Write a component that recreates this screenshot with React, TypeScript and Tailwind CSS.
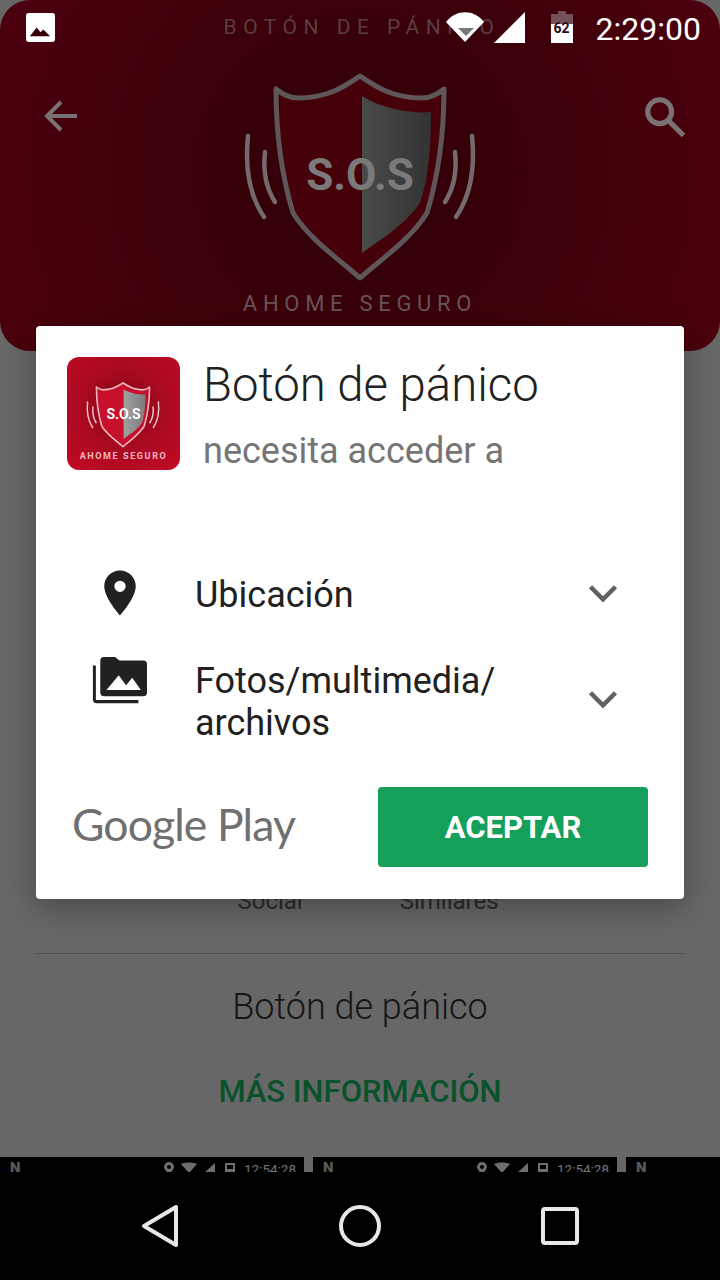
const sans = "font-['Roboto','Liberation_Sans',sans-serif]";

function Shield({ dim }: { dim?: boolean }) {
  const line = dim ? "#5f565a" : "#eeb6bd";
  const fill = dim ? "#46000a" : "#c8102c";
  const wave = dim ? "#736a6e" : "#f3c9ce";
  const sideA = dim ? "#4a4a4a" : "#a0a0a0";
  const sideB = dim ? "#333333" : "#7c7c7c";
  const id = dim ? "side-dim" : "side-bright";
  return (
    <svg viewBox="0 0 240 215" className="h-full w-full">
      <defs>
        <linearGradient id={id} x1="0" x2="1" y1="0" y2="0">
          <stop offset="0" stopColor={sideA} />
          <stop offset="1" stopColor={sideB} />
        </linearGradient>
      </defs>
      <path
        d="M120 6C108 14 90 28 58 28 C50 28 42 24 36 19 C36 60 40 100 53 143 C70 170 100 190 120 208 C140 190 170 170 187 143 C200 100 204 60 204 19 C198 24 190 28 182 28 C150 28 132 14 120 6Z"
        fill={fill}
        stroke={line}
        strokeWidth="5"
        strokeLinejoin="round"
      />
      <path d="M122 26C140 38 170 44 191 42 C191 80 188 110 180 133 C165 155 140 170 122 183Z" fill={`url(#${id})`} />
      <g fill="none" stroke={wave} strokeWidth="4.500" strokeLinecap="round">
        <path d="M8 66 C5 95 9 125 24 147" />
        <path d="M25 82 C23 100 26 118 35 132" />
        <path d="M232 66 C235 95 231 125 216 147" />
        <path d="M215 82 C217 100 214 118 205 132" />
      </g>
    </svg>
  );
}

function MiniStatus() {
  return (
    <div className="flex h-[15px] w-[304px] shrink-0 items-start justify-between overflow-hidden bg-black pt-[5px] pr-[8px] pl-[10px]">
      <span className="text-[15px] leading-[12px] font-black text-[#585858]">N</span>
      <div className="flex items-start gap-[8px]">
        <svg viewBox="0 0 72 12" className="h-[12px] w-[72px]" fill="#6e6e6e">
          <path fillRule="evenodd" d="M5 0a5 5 0 0 1 5 5c0 3-5 7-5 7S0 8 0 5a5 5 0 0 1 5-5zM5 3a2 2 0 1 0 0 4 2 2 0 0 0 0-4z" />
          <path d="M17 2C21 0 29 0 33 2L25 11Z" />
          <path d="M40 11L51 1V11Z" />
          <path fillRule="evenodd" d="M61 1h10v11H61zM63 3v4h6V3z" />
        </svg>
        <span className={`${sans} text-[13.500px] leading-[14px] text-[#777]`}>12:54:28</span>
      </div>
    </div>
  );
}

export default function App() {
  return (
    <div className={`${sans} relative flex h-[1280px] w-[720px] flex-col overflow-hidden bg-[#676767]`}>
      {/* cabecera */}
      <header className="relative h-[351px] shrink-0 rounded-[30px] bg-[radial-gradient(circle_at_50%_50%,#2e0008_0%,#3a0009_40%,#4c000d_100%)]">
        <div className="absolute top-[15px] left-[2px] w-full text-center text-[21px] leading-[24px] tracking-[6.500px] text-[#5a3d45]">BOTÓN DE PÁNICO</div>
        <svg viewBox="0 0 24 24" className="absolute top-[92px] left-[37px] h-[48px] w-[48px]" fill="none" stroke="#7a7175" strokeWidth="2">
          <path d="M20 12H5M12 5l-7 7 7 7" />
        </svg>
        <svg viewBox="0 0 24 24" className="absolute top-[90px] left-[638px] h-[52px] w-[52px]" fill="none" stroke="#7a7175" strokeWidth="2.400">
          <circle cx="10" cy="10" r="5.500" />
          <path d="M14 14l7 7" />
        </svg>
        <div className="absolute top-[70px] left-[240px] h-[215px] w-[240px]">
          <Shield dim />
          <div className="absolute top-[79px] left-0 w-full text-center text-[44px] leading-[52px] font-bold text-[#7a7a7a]">S.O.S</div>
        </div>
        <div className="absolute top-[290px] left-0 w-full text-center text-[22px] leading-[28px] tracking-[5.700px] text-[#6a5358]">AHOME SEGURO</div>

        {/* barra de estado */}
        <div className="relative flex items-start justify-between pt-[11px] pr-[19px] pl-[26px]">
          <svg viewBox="0 0 30 30" className="mt-[2px] h-[29px] w-[29px]">
            <rect x="0" y="0" width="30" height="30" rx="3" fill="#fff" />
            <path d="M4 24l7-9 4 5 3-3 7 7z" fill="#3a0009" />
          </svg>
          <div className="flex items-start">
            <svg viewBox="0 0 38 30" className="mt-[1px] mr-[10px] h-[30px] w-[38px]">
              <path d="M0 10C10 -3 28 -3 38 10L19 30Z" fill="#fff" />
              <path d="M12 16H28L20 24Z" fill="#777" />
            </svg>
            <svg viewBox="0 0 31 31" className="mt-[1px] mr-[26px] h-[31px] w-[31px]">
              <path d="M31 0V31H0Z" fill="#fff" />
            </svg>
            <div className="relative mr-[23px] h-[32px] w-[22px]">
              <svg viewBox="0 0 22 32" className="h-[32px] w-[22px]">
                <path d="M7 0h8v3h7v10H0V3h7z" fill="#73505a" />
                <path d="M0 13h22v19H0z" fill="#fff" />
              </svg>
              <span className="absolute top-[12px] left-0 w-full text-center text-[14px] leading-[10px] font-bold text-[#2a0a10]">62</span>
            </div>
            <span className="mt-[2px] text-[32px] leading-[32px] text-white">2:29:00</span>
          </div>
        </div>
      </header>

      {/* contenido detras del dialogo */}
      <main className="flex flex-1 flex-col items-center">
        <div className="mt-[538px] ml-[16px] flex w-full justify-center gap-[97px] text-[24px] leading-[24px] text-[#2b2b2b]">
          <span>Social</span>
          <span>Similares</span>
        </div>
        <div className="mt-[40px] h-px w-[648px] bg-[#4e4e4e]" />
        <div className="mt-[33px] text-[36px] leading-[40px] font-light text-[#161616]">Botón de pánico</div>
        <div className="mt-[47px] text-[31px] leading-[36px] font-medium text-[#09522b]">MÁS INFORMACIÓN</div>
      </main>

      {/* barra de navegacion */}
      <footer className="h-[123px] shrink-0">
        <div className="flex gap-[9px]">
          <MiniStatus />
          <MiniStatus />
          <div className="h-[15px] flex-1 overflow-hidden bg-black pt-[5px] pl-[10px] text-[15px] leading-[12px] font-black text-[#585858]">N</div>
        </div>
        <div className="flex h-[108px] justify-center bg-black">
          <svg viewBox="0 0 720 60" className="mt-[25px] h-[60px] w-[720px]" fill="none" stroke="#e8e8e8" strokeWidth="4" strokeLinejoin="round">
            <path d="M176 10V48L144 29Z" />
            <circle cx="360" cy="29" r="19" />
            <rect x="543" y="12" width="34" height="34" rx="2" />
          </svg>
        </div>
      </footer>

      {/* dialogo de permisos */}
      <section className="absolute top-[326px] left-[36px] flex h-[573px] w-[648px] flex-col rounded-[4px] bg-white shadow-[0_8px_30px_rgba(0,0,0,0.3)]">
        <div className="flex pt-[31px] pl-[31px]">
          <div className="relative h-[113px] w-[113px] shrink-0 rounded-[12px] bg-[radial-gradient(circle_at_50%_45%,#7a0010_0%,#a80a20_45%,#c40a26_100%)]">
            <div className="absolute top-[24px] left-[18px] h-[68px] w-[76px]"><Shield /></div>
            <div className="absolute top-[48px] left-0 w-full text-center text-[14px] leading-[18px] font-bold text-white">S.O.S</div>
            <div className="absolute top-[93px] left-0 w-full text-center text-[9px] leading-[12px] font-bold tracking-[1.600px] text-[#eeb8c0]">AHOME SEGURO</div>
          </div>
          <div className="pl-[23px]">
            <div className="pt-[2px] text-[47.300px] leading-[52px] font-light text-[#212121]">Botón de pánico</div>
            <div className="pt-[20px] text-[36px] leading-[40px] text-[#757575]">necesita acceder a</div>
          </div>
        </div>

        <div className="mt-[92px] flex h-[60px] items-center pr-[56px]">
          <div className="flex w-[159px] shrink-0 justify-center">
            <svg viewBox="0 0 24 24" className="ml-[9px] h-[54px] w-[54px]" fill="#212121">
              <path d="M12 2C8.100 2 5 5.100 5 9c0 5.200 7 13 7 13s7-7.800 7-13c0-3.900-3.100-7-7-7zm0 9.500a2.500 2.500 0 1 1 0-5 2.500 2.500 0 0 1 0 5z" />
            </svg>
          </div>
          <div className="flex-1 pt-[4px] text-[36px] leading-[40px] text-[#212121]">Ubicación</div>
          <svg viewBox="0 0 24 24" className="h-[50px] w-[50px]" fill="none" stroke="#616161" strokeWidth="2.200"><path d="M6 9l6 6 6-6" /></svg>
        </div>

        <div className="mt-[37px] flex items-start pr-[56px]">
          <div className="flex w-[159px] shrink-0 justify-center">
            <svg viewBox="0 0 24 24" className="mt-[-8px] ml-[3px] h-[59px] w-[59px]" fill="#212121">
              <path d="M2 5.500H3.200V19.500H20.500V20.800H3.500A1.500 1.500 0 0 1 2 19.300Z" />
              <path d="M6.500 2h4.500l1.800 1.500H22.500A1.500 1.500 0 0 1 24 5V16.500A1.500 1.500 0 0 1 22.500 18H6.500A1.500 1.500 0 0 1 5 16.500V3.500A1.500 1.500 0 0 1 6.500 2zM7.500 15.500H21.500L18 10.500 15.500 13.500 12.500 9.500z" fillRule="evenodd" />
            </svg>
          </div>
          <div className="flex-1 text-[36px] leading-[42px] text-[#212121]">Fotos/multimedia/<br />archivos</div>
          <svg viewBox="0 0 24 24" className="mt-[14px] h-[50px] w-[50px]" fill="none" stroke="#616161" strokeWidth="2.200"><path d="M6 9l6 6 6-6" /></svg>
        </div>

        <div className="mt-auto flex items-center justify-between pr-[36px] pb-[32px] pl-[36px]">
          <div className="mb-[6px] font-['Lato',sans-serif] text-[44.500px] leading-[74px] tracking-[-0.02em] text-[#707070]">Google Play</div>
          <button className="h-[80px] w-[270px] rounded-[4px] bg-[#149f5b] pt-[3px] text-[31px] font-bold text-white">ACEPTAR</button>
        </div>
      </section>
    </div>
  );
}
